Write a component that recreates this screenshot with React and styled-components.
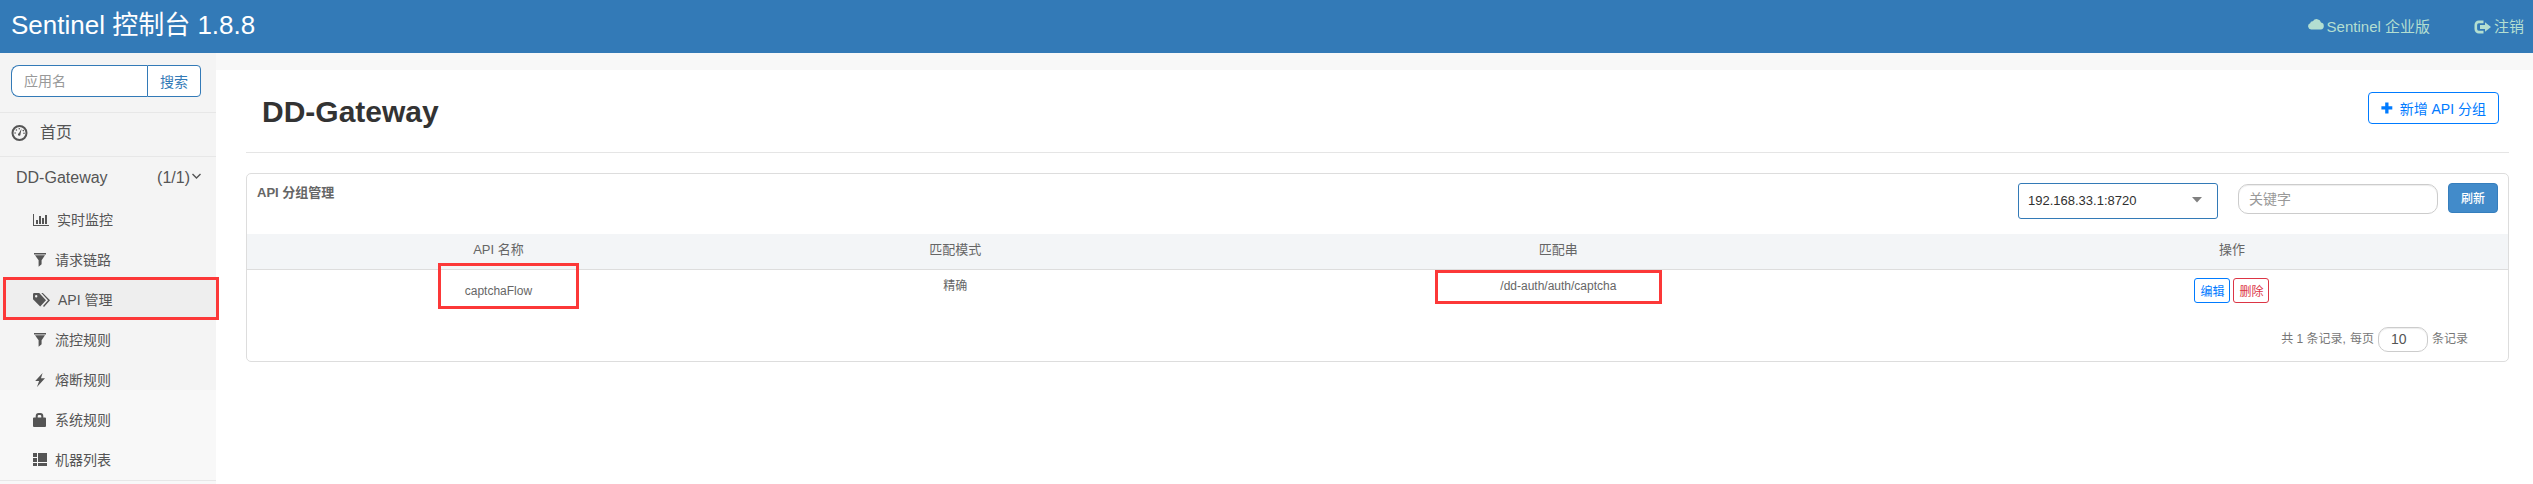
import React from "react";
import styled, { createGlobalStyle, css } from "styled-components";

const sans = `"Liberation Sans", "Noto Sans CJK SC", sans-serif`;

const GlobalStyle = createGlobalStyle`
  *, *::before, *::after { box-sizing: border-box; }
  body { margin: 0; background: #f8f8f8; color: #333; font: 14px/20px ${sans}; }
  button, input, select { font-family: inherit; margin: 0; }
  a { color: inherit; text-decoration: none; }
`;

const TopBar = styled.header`
  display: flex;
  align-items: center;
  justify-content: space-between;
  height: 53px;
  padding: 0 9px 0 11px;
  background: #337ab7;
`;
const Brand = styled.a`
  padding-bottom: 4px;
  color: #fff;
  font-size: 26px;
  line-height: 36px;
`;
const TopLinks = styled.nav`
  display: flex;
  gap: 44px;
  color: #b3dfd1;
  font-size: 15px;
`;
const TopLink = styled.a`
  display: flex;
  align-items: center;
  gap: 3px;
`;

const Body = styled.div`
  display: flex;
  align-items: flex-start;
`;
const Sidebar = styled.aside`
  flex: 0 0 216px;
  min-width: 0;
  background: linear-gradient(#f4f4f4 337px, #f8f8f8 337px);
  color: #555;
`;
const SearchForm = styled.form`
  display: flex;
  height: 60px;
  padding: 12px 15px 16px 11px;
  border-bottom: 1px solid #e7e7e7;
`;
const SearchField = styled.div`
  display: flex;
  flex: 1;
  min-width: 0;
  height: 32px;
`;
const SearchInput = styled.input`
  flex: 1;
  min-width: 0;
  padding: 0 12px;
  border: 1px solid #337ab7;
  border-right: 0;
  border-radius: 8px 0 0 8px;
  background: #fff;
  font-size: 14px;
  outline: none;
  &::placeholder { color: #999; }
`;
const SearchButton = styled.button`
  flex: 0 0 54px;
  height: 32px;
  padding: 0;
  border: 1px solid #337ab7;
  border-radius: 0 4px 4px 0;
  background: #fff;
  color: #337ab7;
  font-size: 14px;
`;
const HomeLink = styled.a`
  display: flex;
  align-items: center;
  gap: 12px;
  height: 44px;
  padding: 0 11px 4px;
  border-bottom: 1px solid #e7e7e7;
  font-size: 16px;
`;
const AppLink = styled.a`
  display: flex;
  align-items: center;
  justify-content: space-between;
  height: 43px;
  padding: 0 15px 2px 16px;
  font-size: 16px;
`;
const AppCount = styled.span`
  display: flex;
  align-items: center;
  gap: 2px;
  svg { margin-bottom: 4px; }
`;
const SubMenu = styled.div`
  border-bottom: 1px solid #e7e7e7;
`;
const SubLink = styled.a`
  position: relative;
  display: flex;
  align-items: center;
  gap: 8px;
  height: 40px;
  padding-left: 33px;
  background: ${(p) => (p.$active ? "#eee" : "transparent")};
`;
const Mark = styled.span`
  position: absolute;
  z-index: 1;
  border: 3px solid #fc3838;
  inset: ${(p) => p.$inset};
  pointer-events: none;
`;

const Main = styled.main`
  flex: 1;
  min-width: 0;
  min-height: calc(100vh - 70px);
  margin-top: 17px;
  padding: 0 24px 24px 30px;
  background: #fff;
`;
const PageHead = styled.div`
  display: flex;
  align-items: flex-start;
  justify-content: space-between;
  height: 83px;
  padding: 22px 10px 0 16px;
  border-bottom: 1px solid #e5e5e5;
`;
const Title = styled.h1`
  margin: 0;
  font-size: 30px;
  line-height: 40px;
`;
const AddButton = styled.button`
  display: flex;
  align-items: center;
  gap: 7px;
  height: 32px;
  padding: 0 12px;
  border: 1px solid #007bff;
  border-radius: 4px;
  background: #fff;
  color: #007bff;
  font-size: 14px;
`;
const Card = styled.section`
  margin-top: 20px;
  border: 1px solid #ddd;
  border-radius: 5px;
  color: #666;
`;
const CardHead = styled.div`
  display: flex;
  align-items: flex-start;
  height: 60px;
  padding: 9px 10px 0;
`;
const CardTitle = styled.h2`
  flex: 1;
  margin: 0;
  font-size: 13px;
  font-weight: 700;
  line-height: 20px;
`;
const SelectWrap = styled.label`
  position: relative;
  display: flex;
  margin-right: 20px;
  svg { position: absolute; right: 16px; top: 14px; pointer-events: none; }
`;
const Select = styled.select`
  appearance: none;
  width: 200px;
  height: 36px;
  padding: 0 9px 2px;
  border: 1px solid #337ab7;
  border-radius: 3px;
  background: #fff;
  color: #303030;
  font-size: 13px;
  outline: none;
`;
const fieldBorder = css`
  border: 1px solid #ccc;
  background: #fff;
  box-shadow: inset 0 1px 1px rgba(0, 0, 0, 0.075);
  outline: none;
`;
const KeywordInput = styled.input`
  width: 200px;
  height: 30px;
  margin: 1px 10px 0 0;
  padding: 0 10px;
  ${fieldBorder}
  border-radius: 10px;
  font-size: 14px;
  &::placeholder { color: #999; }
`;
const RefreshButton = styled.button`
  width: 50px;
  height: 30px;
  padding: 0 0 2px;
  border: 1px solid #357ebd;
  border-radius: 4px;
  background: #428bca;
  color: #fff;
  font-size: 12px;
  font-weight: 500;
`;
const Table = styled.table`
  width: 100%;
  table-layout: fixed;
  border-spacing: 0;
  text-align: center;
`;
const HeadCell = styled.th`
  width: ${(p) => p.$width};
  height: 36px;
  padding: 0 0 3px;
  border-bottom: 1px solid #ddd;
  background: #f3f5f7;
  font-size: 13px;
  font-weight: 400;
`;
const Cell = styled.td`
  height: 41px;
  padding: 8px 0;
  font-size: 12px;
  line-height: 16px;
  vertical-align: ${(p) => (p.$middle ? "middle" : "top")};
`;
const Marked = styled.span`
  position: relative;
  display: inline-block;
`;
const Actions = styled.div`
  display: flex;
  justify-content: center;
  gap: 3px;
`;
const tones = { edit: "#007bff", remove: "#dc3545" };
const SmallButton = styled.button`
  width: 36px;
  height: 25px;
  padding: 0;
  border: 1px solid ${(p) => tones[p.$tone]};
  border-radius: 3px;
  background: #fff;
  color: ${(p) => tones[p.$tone]};
  font-size: 12px;
`;
const Pager = styled.div`
  display: flex;
  align-items: center;
  justify-content: flex-end;
  gap: 4px;
  height: 50px;
  padding: 6px 40px 0 0;
  color: #777;
  font-size: 12px;
`;
const PageSize = styled.input`
  width: 50px;
  height: 25px;
  padding: 0 12px;
  ${fieldBorder}
  border-radius: 10px;
  color: #555;
  font-size: 14px;
`;

const Svg = ({ w, h, children }) => (
  <svg width={w} height={h} viewBox={`0 0 ${w} ${h}`} fill="currentColor" aria-hidden="true">
    {children}
  </svg>
);
const CloudIcon = () => (
  <Svg w={16} h={16}>
    <path d="M3.2 10.5A3.2 3.2 0 0 1 2.2 4.3 2.4 2.4 0 0 1 4.9 2.3 4.4 4.4 0 0 1 13 3.6 3.5 3.5 0 0 1 12.8 10.5Z" />
  </Svg>
);
const LogoutIcon = () => (
  <Svg w={17} h={14}>
    <path d="M9.5 1.9H4.8a3 3 0 0 0-3 3v4.2a3 3 0 0 0 3 3h4.7" fill="none" stroke="currentColor" strokeWidth="2.6" />
    <path d="M6 5h5V2.3L17 7l-6 4.7V9H6Z" />
  </Svg>
);
const DashboardIcon = () => (
  <Svg w={17} h={16}>
    <circle cx="8.5" cy="8" r="7" fill="none" stroke="currentColor" strokeWidth="2" />
    <path d="M10.6 3.6 9.5 9.2a1.3 1.3 0 1 1-1.6-1Z" />
    <circle cx="4.1" cy="8" r="0.8" />
    <circle cx="5.4" cy="5" r="0.8" />
    <circle cx="8.3" cy="3.7" r="0.8" />
    <circle cx="12.3" cy="5.6" r="0.8" />
    <circle cx="13" cy="8.3" r="0.8" />
  </Svg>
);
const ChartIcon = () => (
  <Svg w={16} h={14}>
    <path d="M0 1h1v11h15v1H0ZM3 7h2v4H3ZM6 3h2v8H6ZM9 5h2v6H9ZM12 2h2v9h-2Z" />
  </Svg>
);
const FilterIcon = () => (
  <Svg w={14} h={14}>
    <path d="M1 0h12v1.6H1ZM2 2.2h10L8.6 7.2v4L5.6 13.8V7.2Z" />
  </Svg>
);
const TagsIcon = () => (
  <Svg w={17} h={16}>
    <path fillRule="evenodd" d="M0 2.2A1.2 1.2 0 0 1 1.2 1h5L13 8.3 7.2 14.6 0 7.2ZM3.2 3a1.2 1.2 0 1 0 0 2.4 1.2 1.2 0 0 0 0-2.4Z" />
    <path d="M8.3 1h1.5L17 8.3 11 15l-1-1 5-5.7Z" />
  </Svg>
);
const FlashIcon = () => (
  <Svg w={14} h={14}>
    <path d="M9.6 0 2.2 7.9h3.9L4 14l8-8.7H8Z" />
  </Svg>
);
const LockIcon = () => (
  <Svg w={14} h={14}>
    <path fillRule="evenodd" d="M0 5.5A1 1 0 0 1 1 4.5h1.7V3a3 3 0 0 1 3-3h1.6a3 3 0 0 1 3 3v1.5H12a1 1 0 0 1 1 1V13a1 1 0 0 1-1 1H1a1 1 0 0 1-1-1ZM4.7 4.5h3.6V3.2A1.2 1.2 0 0 0 7.1 2H5.9a1.2 1.2 0 0 0-1.2 1.2Z" />
  </Svg>
);
const ListIcon = () => (
  <Svg w={14} h={14}>
    <path d="M0 0h4v4H0ZM0 5h4v4H0ZM5 0h9v9H5ZM0 10h4v3H0ZM5 10h9v3H5Z" />
  </Svg>
);
const ChevronIcon = () => (
  <Svg w={9} h={8}>
    <path d="M0.5 2 4.5 6 8.5 2" fill="none" stroke="currentColor" strokeWidth="1.4" />
  </Svg>
);
const PlusIcon = () => (
  <Svg w={12} h={12}>
    <path d="M4.2 0.5h3.3v3.8h3.8v3.3H7.5v3.8H4.2V7.6H0.4V4.3h3.8Z" />
  </Svg>
);
const CaretIcon = () => (
  <Svg w={10} h={6}>
    <path d="M0 0h10L5 5.5Z" fill="#808080" />
  </Svg>
);

const menu = [
  ["实时监控", ChartIcon],
  ["请求链路", FilterIcon],
  ["API 管理", TagsIcon],
  ["流控规则", FilterIcon],
  ["熔断规则", FlashIcon],
  ["系统规则", LockIcon],
  ["机器列表", ListIcon],
];

const columns = [
  ["API 名称", "22.24%"],
  ["匹配模式", "18.18%"],
  ["匹配串", "35.16%"],
  ["操作", "auto"],
];

export default function App() {
  return (
    <>
      <GlobalStyle />
      <TopBar>
        <Brand href="#">Sentinel 控制台 1.8.8</Brand>
        <TopLinks>
          <TopLink href="#"><CloudIcon />Sentinel 企业版</TopLink>
          <TopLink href="#"><LogoutIcon />注销</TopLink>
        </TopLinks>
      </TopBar>
      <Body>
        <Sidebar>
          <SearchForm onSubmit={(e) => e.preventDefault()}>
            <SearchField>
              <SearchInput aria-label="应用名" placeholder="应用名" />
              <SearchButton type="submit">搜索</SearchButton>
            </SearchField>
          </SearchForm>
          <HomeLink href="#"><DashboardIcon />首页</HomeLink>
          <AppLink href="#">
            DD-Gateway
            <AppCount>(1/1)<ChevronIcon /></AppCount>
          </AppLink>
          <SubMenu>
            {menu.map(([label, Icon]) => {
              const active = label === "API 管理";
              return (
                <SubLink key={label} href="#" $active={active}>
                  <Icon />
                  {label}
                  {active && <Mark $inset="-3px -3px 0 3px" />}
                </SubLink>
              );
            })}
          </SubMenu>
        </Sidebar>
        <Main>
          <PageHead>
            <Title>DD-Gateway</Title>
            <AddButton type="button"><PlusIcon />新增 API 分组</AddButton>
          </PageHead>
          <Card>
            <CardHead>
              <CardTitle>API 分组管理</CardTitle>
              <SelectWrap>
                <Select aria-label="机器" defaultValue="192.168.33.1:8720">
                  <option>192.168.33.1:8720</option>
                </Select>
                <CaretIcon />
              </SelectWrap>
              <KeywordInput aria-label="关键字" placeholder="关键字" />
              <RefreshButton type="button">刷新</RefreshButton>
            </CardHead>
            <Table>
              <thead>
                <tr>
                  {columns.map(([name, width]) => (
                    <HeadCell key={name} $width={width}>{name}</HeadCell>
                  ))}
                </tr>
              </thead>
              <tbody>
                <tr>
                  <Cell $middle>
                    <Marked>captchaFlow<Mark $inset="-20px -47px -10px -27px" /></Marked>
                  </Cell>
                  <Cell>精确</Cell>
                  <Cell>
                    <Marked>/dd-auth/auth/captcha<Mark $inset="-8px -46px -10px -65px" /></Marked>
                  </Cell>
                  <Cell>
                    <Actions>
                      <SmallButton type="button" $tone="edit">编辑</SmallButton>
                      <SmallButton type="button" $tone="remove">删除</SmallButton>
                    </Actions>
                  </Cell>
                </tr>
              </tbody>
            </Table>
            <Pager>
              <span>共 1 条记录,</span>
              <label htmlFor="page-size">每页</label>
              <PageSize id="page-size" defaultValue="10" />
              <span>条记录</span>
            </Pager>
          </Card>
        </Main>
      </Body>
    </>
  );
}
